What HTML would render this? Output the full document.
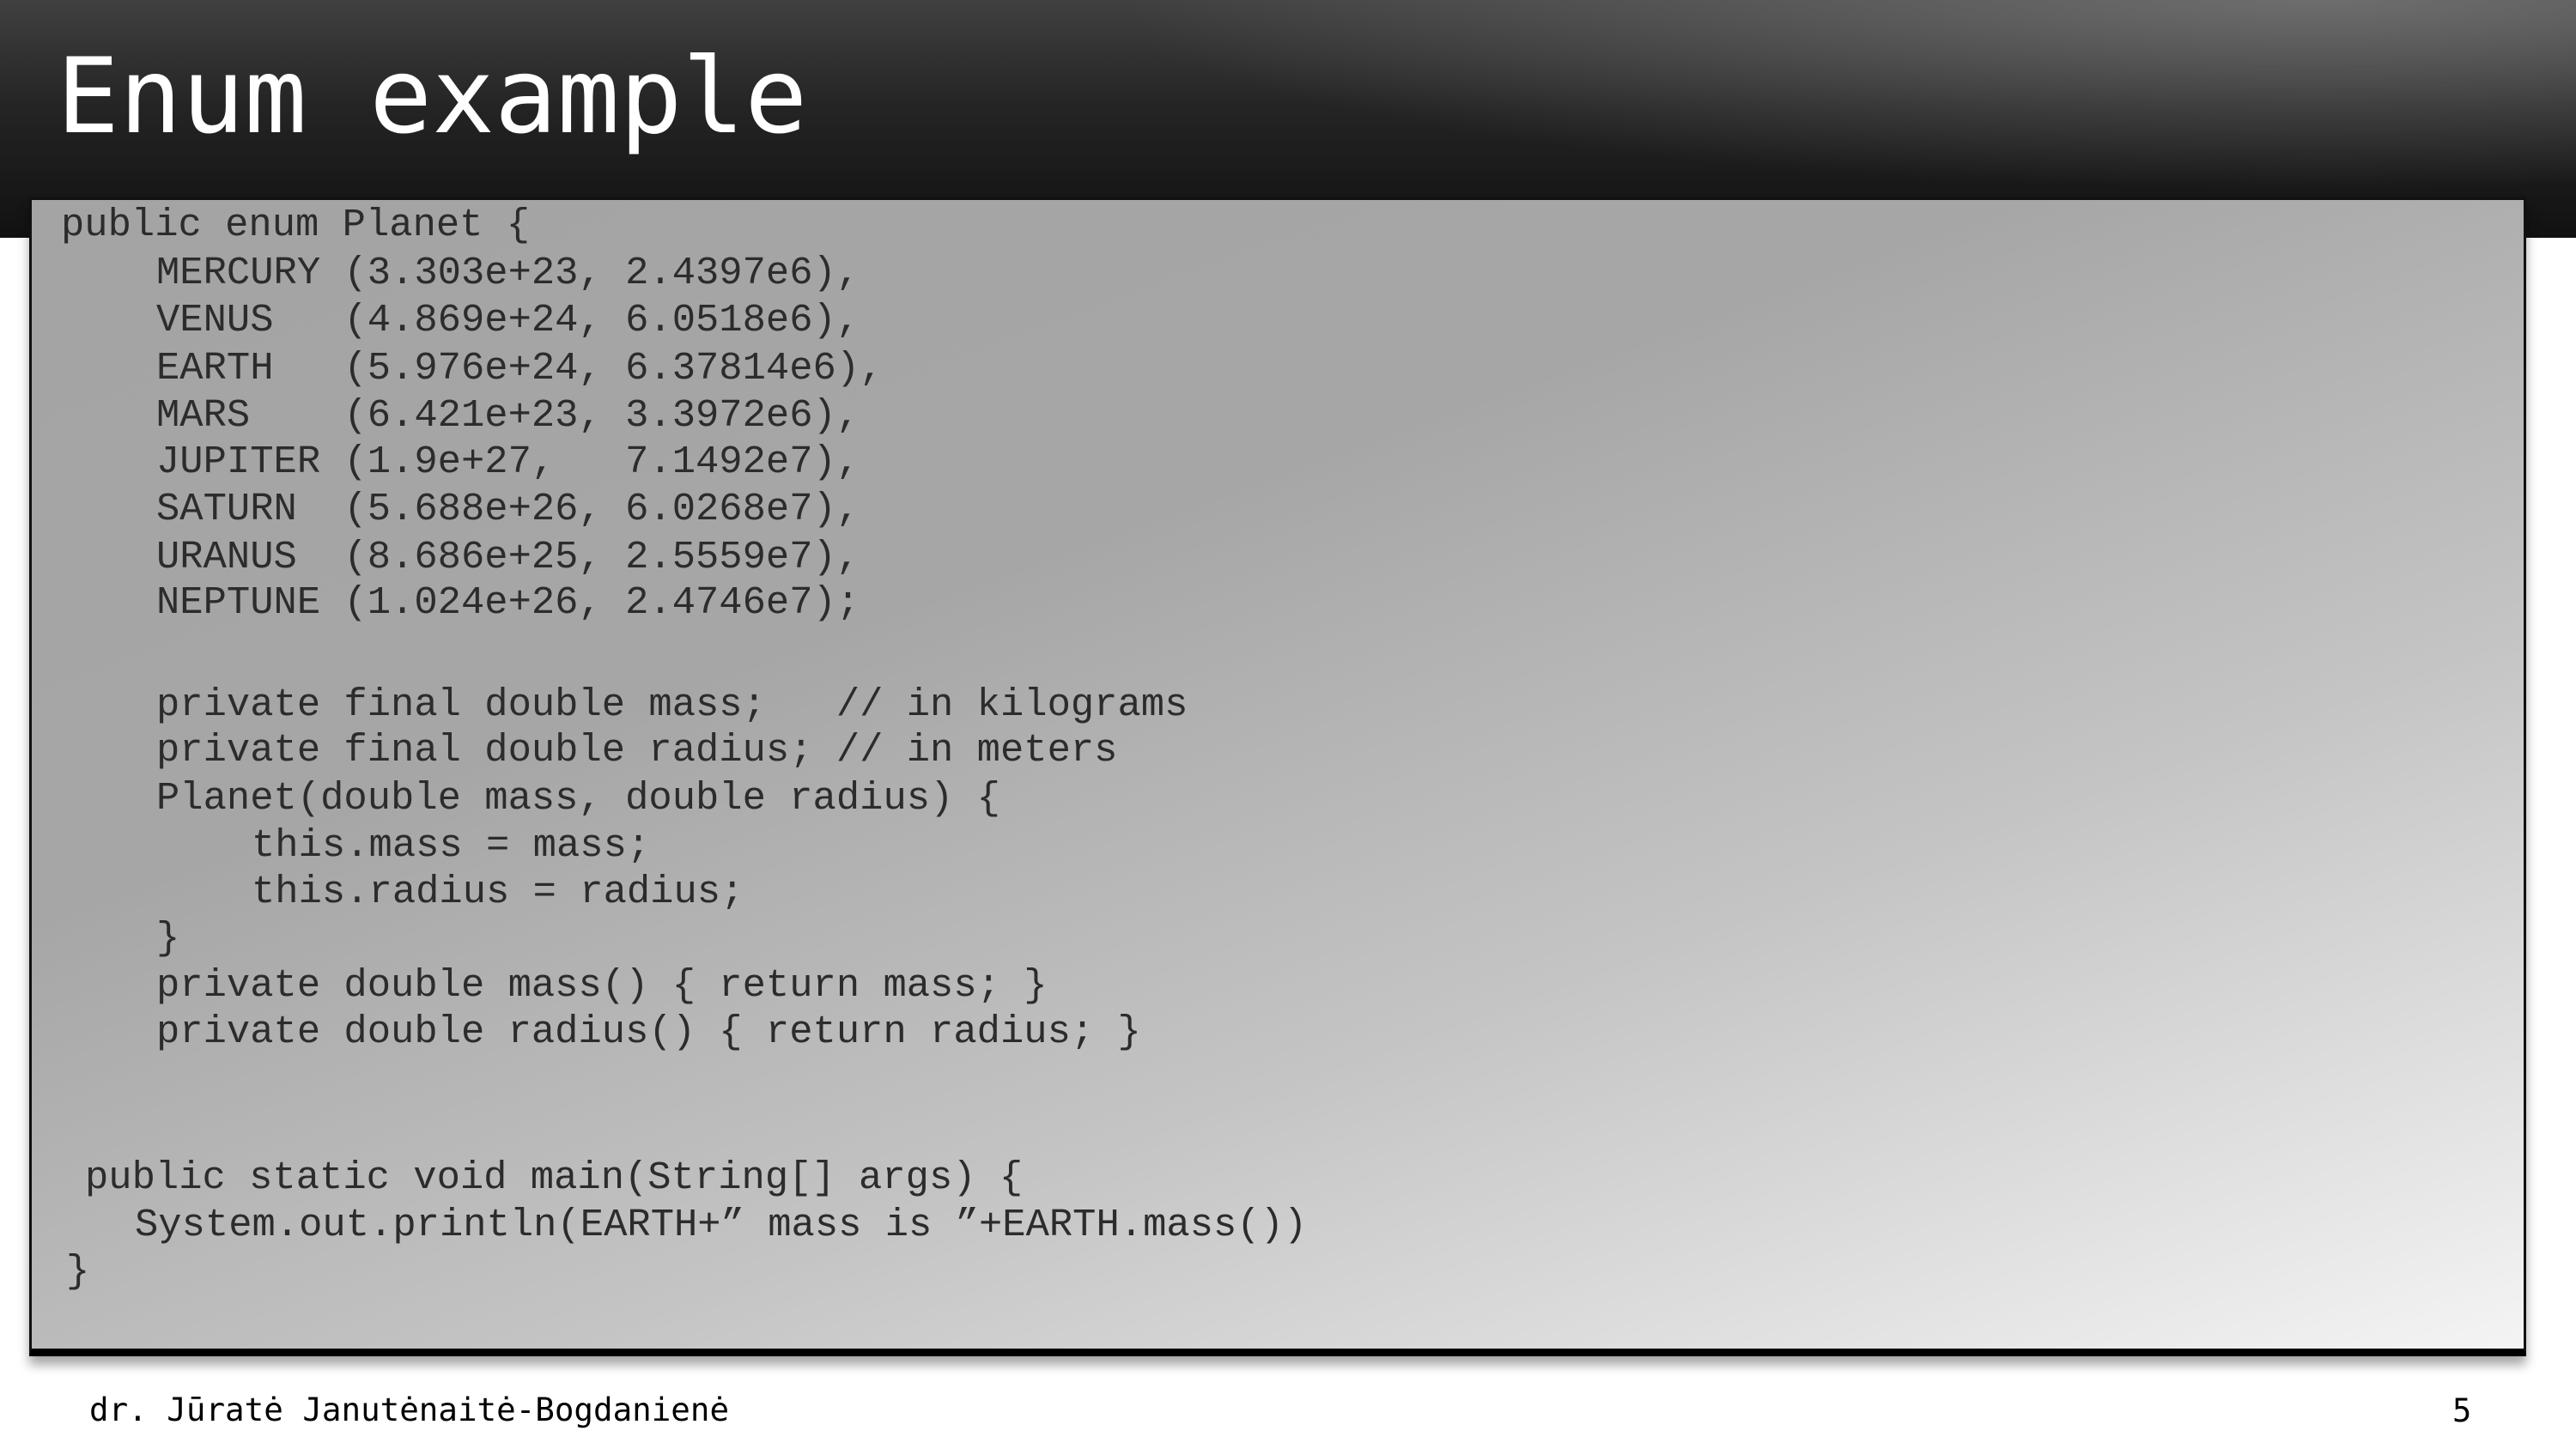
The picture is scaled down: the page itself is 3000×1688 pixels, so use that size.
<!DOCTYPE html>
<html><head><meta charset="utf-8"><style>
html,body{margin:0;padding:0}
body{width:3000px;height:1688px;position:relative;overflow:hidden;background:#fff;font-family:"Liberation Mono",monospace}
#hdr{position:absolute;left:0;top:0;width:3000px;height:277px;background:linear-gradient(to bottom,#404040 0%,#242424 45%,#111 100%)}
#hdr:after{content:"";position:absolute;inset:0;background:radial-gradient(ellipse 1400px 220px at 2700px 0px,rgba(140,140,140,.6),rgba(140,140,140,0))}
#title{position:absolute;left:66px;top:38px;font-family:"DejaVu Sans Mono",monospace;font-size:121px;color:#fff;line-height:150px;z-index:2}
#box{position:absolute;left:34px;top:230px;width:2902px;height:1338px;border:3px solid #111;border-bottom:9px solid #000;background:linear-gradient(160deg,#a4a4a4 0%,#a6a6a6 35%,#c4c4c4 65%,#f4f4f4 100%);box-shadow:0 10px 12px rgba(0,0,0,.35);z-index:3}
.l{position:absolute;font-size:45.5px;line-height:56px;color:#2c2c2c;white-space:pre;z-index:4}
#foot{position:absolute;left:104px;top:1620px;font-family:"DejaVu Sans Mono",monospace;font-size:37.5px;color:#000}
#pg{position:absolute;left:2856px;top:1622px;font-family:"DejaVu Sans Mono",monospace;font-size:37px;color:#000}
</style></head><body>
<div id="hdr"></div>
<div id="title">Enum example</div>
<div id="box"></div>
<div class="l" style="left:71px;top:234px">public enum Planet {</div>
<div class="l" style="left:182px;top:290px">MERCURY (3.303e+23, 2.4397e6),</div>
<div class="l" style="left:182px;top:345px">VENUS   (4.869e+24, 6.0518e6),</div>
<div class="l" style="left:182px;top:401px">EARTH   (5.976e+24, 6.37814e6),</div>
<div class="l" style="left:182px;top:456px">MARS    (6.421e+23, 3.3972e6),</div>
<div class="l" style="left:182px;top:510px">JUPITER (1.9e+27,   7.1492e7),</div>
<div class="l" style="left:182px;top:565px">SATURN  (5.688e+26, 6.0268e7),</div>
<div class="l" style="left:182px;top:621px">URANUS  (8.686e+25, 2.5559e7),</div>
<div class="l" style="left:182px;top:674px">NEPTUNE (1.024e+26, 2.4746e7);</div>
<div class="l" style="left:182px;top:793px">private final double mass;   // in kilograms</div>
<div class="l" style="left:182px;top:846px">private final double radius; // in meters</div>
<div class="l" style="left:182px;top:902px">Planet(double mass, double radius) {</div>
<div class="l" style="left:293px;top:957px">this.mass = mass;</div>
<div class="l" style="left:293px;top:1011px">this.radius = radius;</div>
<div class="l" style="left:182px;top:1065px">}</div>
<div class="l" style="left:182px;top:1120px">private double mass() { return mass; }</div>
<div class="l" style="left:182px;top:1174px">private double radius() { return radius; }</div>
<div class="l" style="left:99px;top:1344px">public static void main(String[] args) {</div>
<div class="l" style="left:157px;top:1399px">System.out.println(EARTH+” mass is ”+EARTH.mass())</div>
<div class="l" style="left:77px;top:1453px">}</div>
<div id="foot">dr. Jūratė Janutėnaitė-Bogdanienė</div>
<div id="pg">5</div>
</body></html>
